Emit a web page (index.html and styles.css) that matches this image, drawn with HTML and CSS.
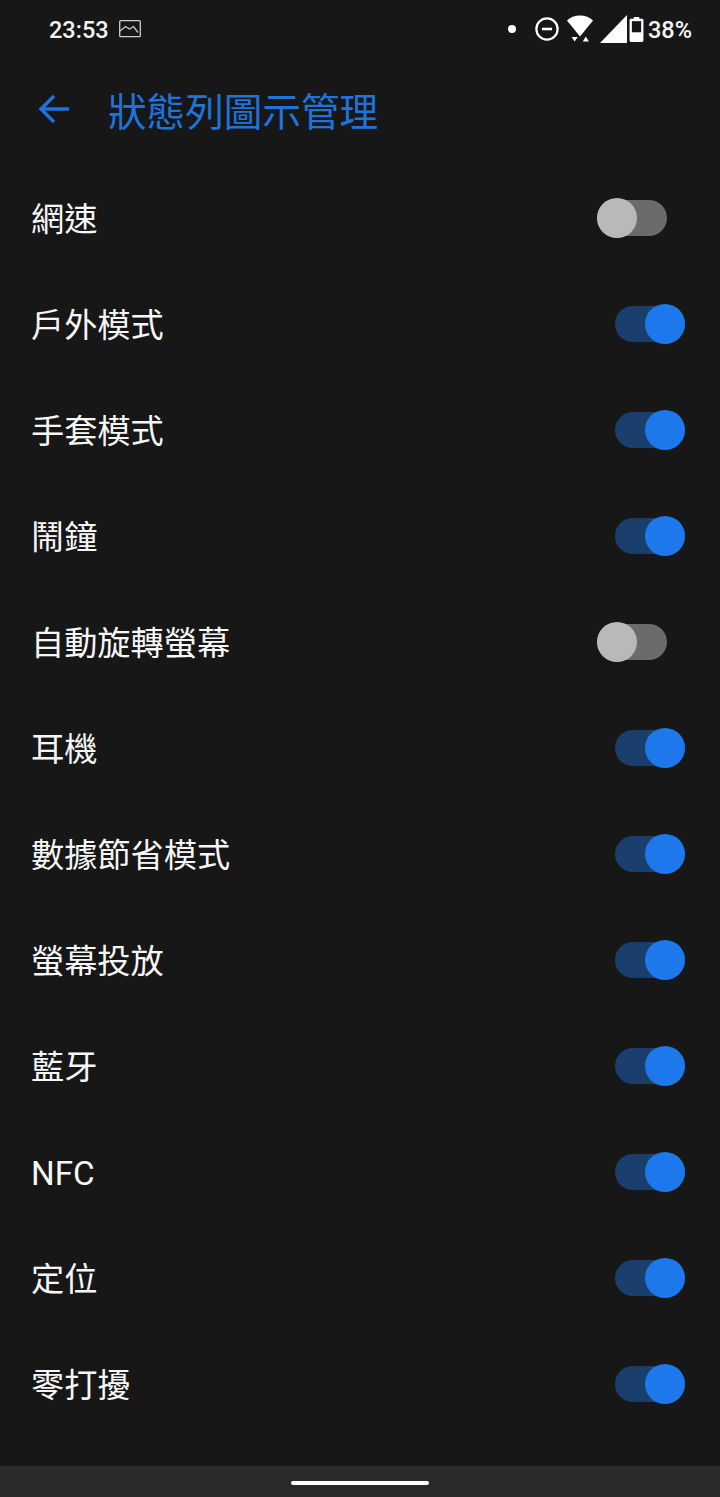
FILE: index.html
```html
<!DOCTYPE html>
<html lang="zh-Hant">
<head>
  <meta charset="UTF-8">
  <meta name="viewport" content="width=device-width, initial-scale=1.0">
  <title>狀態列圖示管理</title>
  <link rel="stylesheet" href="styles.css">
</head>
<body>

<div class="screen">
  <div class="status">
    <div class="status-left">
      <span class="time">23:53</span>
      <svg class="pic" width="22" height="18" viewBox="0 0 22 18" fill="none" stroke="#ccc" stroke-width="1.3">
        <rect x="0.7" y="0.7" width="20.6" height="16" rx="1"/>
        <path d="M1 11 L6.500 6.500 L10.500 9 L14.500 6.500 L19 12.500"/>
      </svg>
    </div>
    <div class="status-right">
      <span class="dot"></span>
      <svg class="dnd" width="24" height="24" viewBox="0 0 26 26" fill="none" stroke="#fff">
        <circle cx="13" cy="13" r="11.500" stroke-width="2.400"/>
        <path d="M7.500 13 H18.500" stroke-width="2.800"/>
      </svg>
      <svg class="wifi" width="28" height="28" viewBox="0 0 29 30" fill="#fff">
        <path d="M0.500 6 C4 2.500 9 0.500 14.500 0.500 C20 0.500 25 2.500 28.500 6 L14.500 23 Z"/>
        <path d="M5.500 23.500 H12 L8.700 28.500 Z"/>
        <path d="M17.500 28.500 L20.700 23 L24 28.500 Z"/>
      </svg>
      <svg class="signal" width="27" height="28" viewBox="0 0 27 28" fill="#fff">
        <path d="M27 0 V28 H0 Z"/>
      </svg>
      <svg class="battery" width="15" height="25" viewBox="0 0 15 27">
        <path fill="#fff" d="M4.500 0 H10.500 V2 H13.500 A1.500 1.500 0 0 1 15 3.500 V25.500 A1.500 1.500 0 0 1 13.500 27 H1.500 A1.500 1.500 0 0 1 0 25.500 V3.500 A1.500 1.500 0 0 1 1.500 2 H4.500 Z"/>
        <rect x="2.500" y="4.500" width="10" height="12" fill="#171717"/>
      </svg>
      <span class="percent">38%</span>
    </div>
  </div>

  <div class="header">
    <svg class="back" width="32" height="30" viewBox="0 0 32 30" fill="none" stroke="#1f74dc" stroke-width="3.400">
      <path d="M31 15 H3"/>
      <path d="M16 2 L3 15 L16 28"/>
    </svg>
    <h1>狀態列圖示管理</h1>
  </div>

  <div class="list">
    <div class="row"><span class="label">網速</span><span class="toggle off"></span></div>
    <div class="row"><span class="label">戶外模式</span><span class="toggle"></span></div>
    <div class="row"><span class="label">手套模式</span><span class="toggle"></span></div>
    <div class="row"><span class="label">鬧鐘</span><span class="toggle"></span></div>
    <div class="row"><span class="label">自動旋轉螢幕</span><span class="toggle off"></span></div>
    <div class="row"><span class="label">耳機</span><span class="toggle"></span></div>
    <div class="row"><span class="label">數據節省模式</span><span class="toggle"></span></div>
    <div class="row"><span class="label">螢幕投放</span><span class="toggle"></span></div>
    <div class="row"><span class="label">藍牙</span><span class="toggle"></span></div>
    <div class="row"><span class="nfc">NFC</span><span class="toggle"></span></div>
    <div class="row"><span class="label">定位</span><span class="toggle"></span></div>
    <div class="row"><span class="label">零打擾</span><span class="toggle"></span></div>
  </div>

  <div class="navbar"><span class="pill"></span></div>
</div>

</body>
</html>
```

FILE: styles.css
```css
body {
  margin: 0;
  background-color: #171717;
  color: #fff;
  font-family: Roboto, "Noto Sans CJK TC", sans-serif;
}

.screen {
  width: 720px;
  height: 1497px;
  display: flex;
  flex-direction: column;
  overflow: hidden;
}

.status {
  height: 60px;
  padding: 0 28px 0 49px;
  display: flex;
  justify-content: space-between;
  align-items: center;
}

.status-left {
  display: flex;
  align-items: center;
  gap: 10px;
}

.time {
  font-size: 23.500px;
  font-weight: 500;
  color: #f4f4f4;
}

.pic {
  margin-bottom: 2px;
}

.status-right {
  display: flex;
  align-items: center;
}

.status-right svg {
  margin-bottom: 2px;
}

.dot {
  width: 8px;
  height: 8px;
  border-radius: 50%;
  background-color: #fff;
  margin: 0 19px 2px 0;
}

.wifi {
  margin-left: 7px;
}

.signal {
  margin-left: 6px;
}

.battery {
  margin-left: 2px;
}

.percent {
  margin-left: 4px;
  font-size: 23.500px;
  font-weight: 500;
  color: #f4f4f4;
}

.header {
  height: 105px;
  padding: 0 0 0 38px;
  display: flex;
  align-items: center;
  gap: 38px;
}

.back {
  margin-bottom: 8px;
}

h1 {
  margin: 0 0 8px;
  font-size: 38.600px;
  font-weight: 400;
  color: #1f74dc;
}

.list {
  flex: 1;
}

.row {
  height: 106px;
  padding: 0 35px 0 31px;
  display: flex;
  justify-content: space-between;
  align-items: center;
  font-size: 33.200px;
  color: #f6f6f6;
}

.label {
  margin-bottom: 4px;
}

.nfc {
  margin-top: 2px;
}

.toggle {
  position: relative;
  width: 70px;
  height: 36px;
  border-radius: 18px;
  background-color: #1b3f6d;
}

.toggle::after {
  content: "";
  position: absolute;
  top: -2px;
  right: 0;
  width: 40px;
  height: 40px;
  border-radius: 50%;
  background-color: #1d78ec;
}

.toggle.off {
  margin-right: 18px;
  background-color: #6b6b6b;
}

.toggle.off::after {
  right: auto;
  left: 0;
  background-color: #b9b9b9;
}

.navbar {
  height: 31px;
  background-color: #2a2a2a;
  display: flex;
  justify-content: center;
  align-items: center;
}

.pill {
  width: 138px;
  height: 4px;
  margin-top: 3px;
  border-radius: 2px;
  background-color: #fff;
}
```
